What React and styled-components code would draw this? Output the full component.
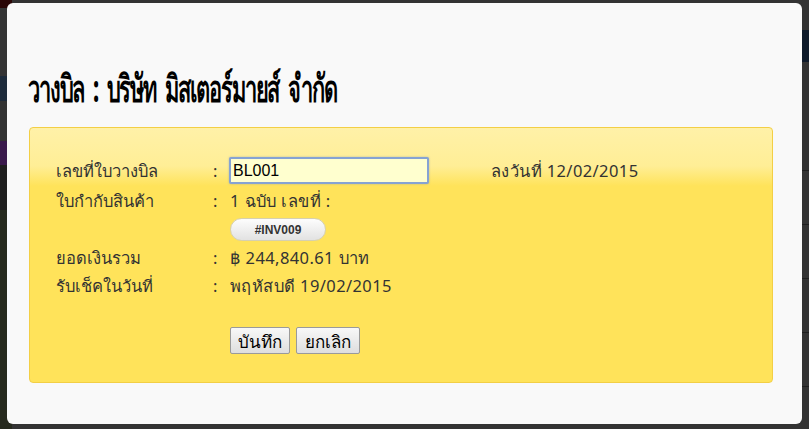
import React from "react";
import styled, { createGlobalStyle } from "styled-components";

const Global = createGlobalStyle`
  html, body { margin: 0; padding: 0; }
  body {
    width: 809px; height: 429px; overflow: hidden;
    background: #333;
    font-family: Tahoma, "Noto Sans", "DejaVu Sans", sans-serif;
  }
`;

const Page = styled.div`
  width: 809px; height: 429px;
  display: flex;
  background: #333;
`;

const SideStrip = styled.div`
  width: 12px;
  display: flex;
  flex-direction: column;
`;

const Band = styled.div`
  height: ${(p) => p.$h}px;
  background: ${(p) => p.$c};
  flex: ${(p) => (p.$grow ? 1 : "none")};
`;

const PageMain = styled.div`
  flex: 1;
`;

const RightStrip = styled.div`
  width: 12px;
  display: flex;
  flex-direction: column;
`;

const TableRow = styled.div`
  height: 53px;
  border-bottom: 1px solid #1e1e1e;
  background: #333;
`;

const Overlay = styled.div`
  position: fixed;
  inset: 0;
  display: flex;
  align-items: flex-start;
  justify-content: flex-start;
  padding: 3px 0 0 7px;
`;

const Modal = styled.div`
  width: 795px;
  height: 421px;
  box-sizing: border-box;
  background: #f9f9f9;
  border-radius: 6px;
  padding: 58px 29px 0 22px;
  display: flex;
  flex-direction: column;
`;

const Title = styled.h2`
  margin: 0 0 0 -1px;
  height: 66px;
  font-size: 38px;
  font-weight: 800;
  color: #000;
  line-height: 52px;
  letter-spacing: -2px;
  word-spacing: 7px;
  white-space: nowrap;
  transform: scaleX(0.575);
  transform-origin: left center;
`;

const YellowBox = styled.div`
  box-sizing: border-box;
  height: 256px;
  border: 1px solid #f3cf45;
  border-radius: 4px;
  background: linear-gradient(
    to bottom,
    #fff1a8 0px,
    #ffee96 38px,
    #ffe35a 58px,
    #ffe35a 100%
  );
  padding: 29px 20px 0 26px;
`;

const FormGrid = styled.div`
  display: grid;
  grid-template-columns: 157px 17px 1fr;
  row-gap: 6px;
  align-items: center;
  font-size: 16.5px;
  color: #333;
  line-height: 22px;
`;

const Label = styled.div`
  white-space: nowrap;
`;

const Colon = styled.div``;

const Value = styled.div`
  display: flex;
  align-items: center;
  white-space: nowrap;
  letter-spacing: 0.4px;
`;

const TextInput = styled.input`
  box-sizing: border-box;
  width: 200px;
  height: 27px;
  margin-left: -1px;
  border: 2px solid #86a3d3;
  border-radius: 2px;
  background: #ffffcf;
  box-shadow: 0 0 2px rgba(90, 130, 200, 0.5);
  font-family: "Liberation Sans", Arial, sans-serif;
  font-size: 16px;
  letter-spacing: 0;
  color: #000;
  padding: 0 2px;
  outline: none;
`;

const DateText = styled.span`
  margin-left: 62px;
`;

const Badge = styled.span`
  box-sizing: border-box;
  display: inline-flex;
  align-items: center;
  justify-content: center;
  width: 96px;
  height: 23px;
  border-radius: 12px;
  border: 1px solid #d6d0b0;
  background: linear-gradient(to bottom, #fdfdfd, #e2e2e2);
  font-family: "Liberation Sans", Arial, sans-serif;
  font-weight: bold;
  font-size: 12px;
  letter-spacing: 0;
  color: #333;
`;

const Actions = styled.div`
  display: flex;
  gap: 6px;
  margin: 30px 0 0 174px;
`;

const Button = styled.button`
  box-sizing: border-box;
  height: 27px;
  width: ${(p) => p.$w}px;
  padding: 0;
  border: 1px solid #9a9a9a;
  border-radius: 2px;
  background: linear-gradient(to bottom, #f8f8f8, #dedede);
  font-family: Tahoma, "Noto Sans", "DejaVu Sans", sans-serif;
  font-size: 17px;
  color: #000;
`;

export default function App() {
  return (
    <>
      <Global />
      <Page>
        <SideStrip>
          <Band $h={8} $c="#2a0606" />
          <Band $h={68} $c="#343434" />
          <Band $h={25} $c="#1d2b3b" />
          <Band $h={40} $c="#333" />
          <Band $h={24} $c="#3a1a4c" />
          <Band $h={45} $c="#1f1f1f" />
          <Band $c="#262a1e" $grow />
        </SideStrip>
        <PageMain />
        <RightStrip>
          <Band $h={30} $c="#333" />
          <Band $h={32} $c="#0e1a2a" />
          <Band $h={55} $c="#333" />
          <TableRow />
          <TableRow />
          <TableRow />
          <TableRow />
          <TableRow />
        </RightStrip>
      </Page>
      <Overlay>
        <Modal>
          <Title>วางบิล : บริษัท มิสเตอร์มายส์ จำกัด</Title>
          <YellowBox>
            <FormGrid>
              <Label>เลขที่ใบวางบิล</Label>
              <Colon>:</Colon>
              <Value>
                <TextInput defaultValue="BL001" />
                <DateText>ลงวันที่ 12/02/2015</DateText>
              </Value>

              <Label>ใบกำกับสินค้า</Label>
              <Colon>:</Colon>
              <Value>1 ฉบับ เลขที่ :</Value>

              <Label />
              <Colon />
              <Value>
                <Badge>#INV009</Badge>
              </Value>

              <Label>ยอดเงินรวม</Label>
              <Colon>:</Colon>
              <Value>฿ 244,840.61 บาท</Value>

              <Label>รับเช็คในวันที่</Label>
              <Colon>:</Colon>
              <Value>พฤหัสบดี 19/02/2015</Value>
            </FormGrid>
            <Actions>
              <Button $w={60}>บันทึก</Button>
              <Button $w={64}>ยกเลิก</Button>
            </Actions>
          </YellowBox>
        </Modal>
      </Overlay>
    </>
  );
}
